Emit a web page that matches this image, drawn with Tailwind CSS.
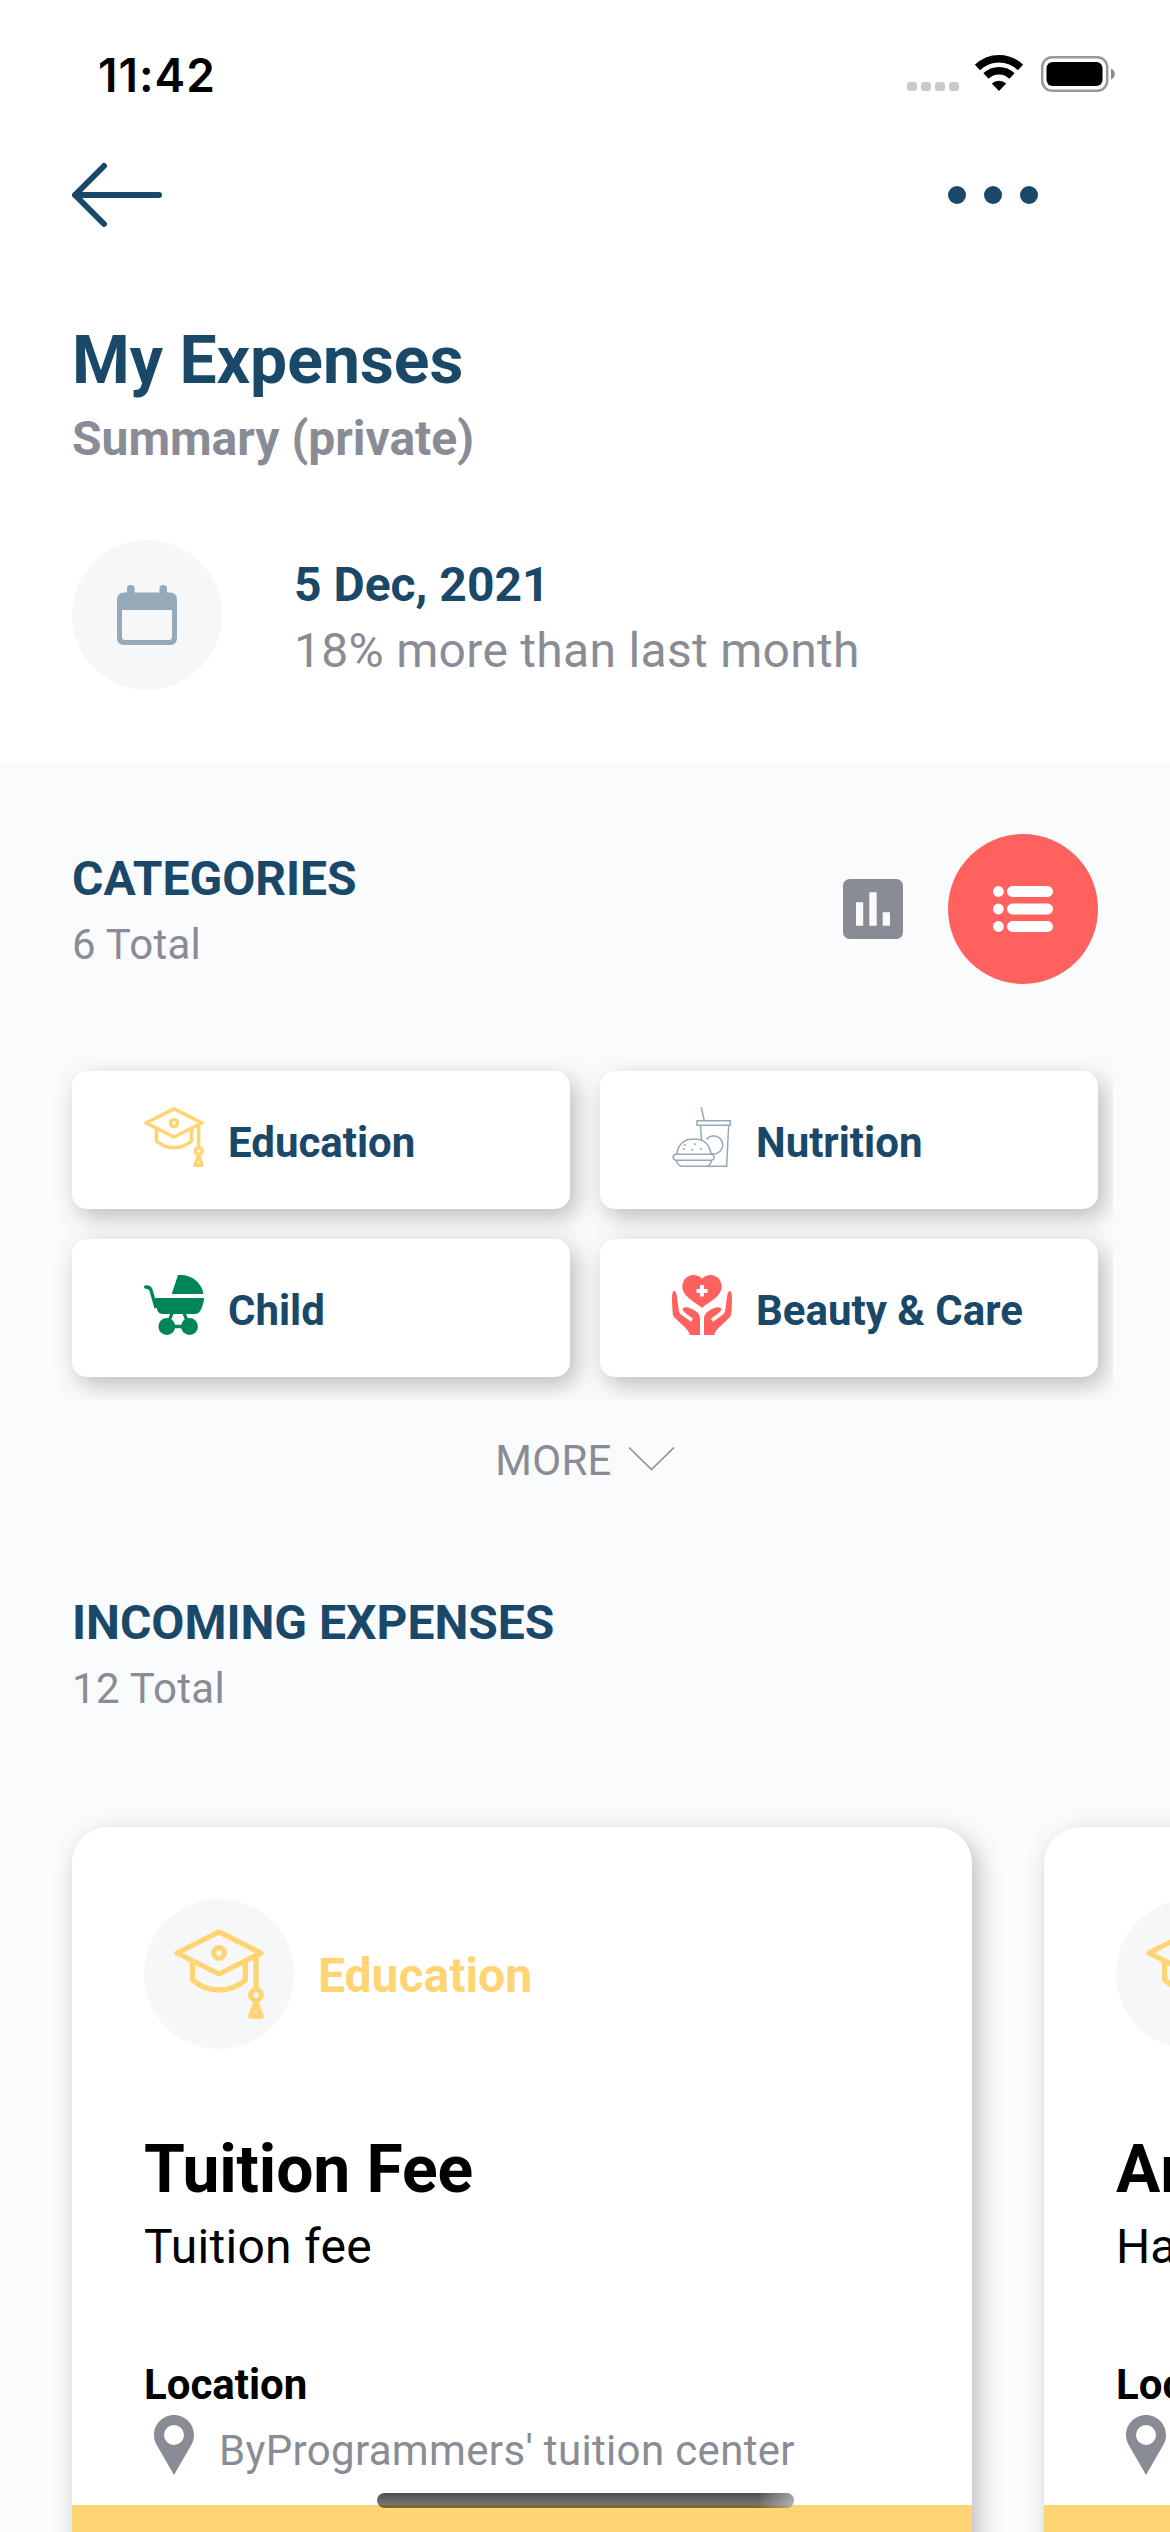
<!DOCTYPE html>
<html lang="en">
<head>
<meta charset="utf-8">
<title>My Expenses</title>
<script src="https://cdn.jsdelivr.net/npm/@tailwindcss/browser@4"></script>
</head>
<body class="bg-[#fafbfd]">
<svg class="hidden">
  <symbol id="cap" viewBox="0 0 90 90">
    <g fill="none" stroke="#ffd573" stroke-width="5.3" stroke-linejoin="round" stroke-linecap="round">
      <path d="M45 2.8 87 24 45 45 3 24Z"/>
      <circle cx="45" cy="24" r="5.3"/>
      <path d="M18.6 33V51Q30 61 45 61Q60 61 71.3 51V33M82 27V60"/>
      <circle cx="82" cy="66" r="5.3"/>
      <path d="M82 73.5 87.2 87.2H76.6Z"/>
    </g>
  </symbol>
  <symbol id="pin" viewBox="0 0 60 60">
    <path fill="#898c95" fill-rule="evenodd" d="M30 0C19 0 10 9 10 20C10 24 11 27 13 30.500L30 60 47 30.500C49 27 50 24 50 20C50 9 41 0 30 0ZM30 30A10 10 0 1 1 30 10A10 10 0 0 1 30 30Z"/>
  </symbol>
</svg>
<div class="relative flex h-[2532px] w-[1170px] flex-col overflow-hidden bg-[#fafbfd] font-[Roboto,sans-serif] text-[#194868]">
  <header class="h-[762px] shrink-0 bg-white">
    <div class="flex h-[150px] items-start justify-between pt-[47px] pr-[53px] pl-[98px]">
      <span class="font-[Inter,sans-serif] text-[46px] leading-[56px] font-semibold tracking-[1px] text-black">11:42</span>
      <svg class="mt-[6px] h-[42px] w-[212px]" viewBox="905 53 212 42">
        <g fill="#cbcbcb"><rect x="907" y="82" width="10" height="9" rx="3"/><rect x="921" y="82" width="10" height="9" rx="3"/><rect x="935" y="82" width="10" height="9" rx="3"/><rect x="949" y="82" width="10" height="9" rx="3"/></g>
        <g fill="none" stroke="#000">
          <path stroke-width="7.500" d="M977.500 67.500A30.500 30.500 0 0 1 1020.500 67.500"/>
          <path stroke-width="7.500" d="M986 76A18.500 18.500 0 0 1 1012 76"/>
        </g>
        <path d="M999 91 991.800 83.600A10.300 10.300 0 0 1 1006.200 83.600Z"/>
        <rect x="1042.200" y="57.200" width="65" height="33.600" rx="10" fill="none" stroke="#999" stroke-width="2.500"/>
        <rect x="1046.500" y="62" width="56" height="24" rx="6"/>
        <path fill="#8a8a8a" d="M1111 68.500C1116 70.500 1116 77.500 1111 79.500Z"/>
      </svg>
    </div>
    <div class="flex h-[90px] items-center justify-between pr-[132px] pl-[72px]">
      <svg class="h-[66px] w-[91px]" viewBox="0 0 91 66" fill="none" stroke="#194868" stroke-width="6" stroke-linecap="round" stroke-linejoin="round"><path d="M87 33H3M32 4 3 33 32 62"/></svg>
      <svg class="h-[18px] w-[90px]" viewBox="0 0 90 18" fill="#194868"><circle cx="9" cy="9" r="9"/><circle cx="45" cy="9" r="9"/><circle cx="81" cy="9" r="9"/></svg>
    </div>
    <div class="px-[72px] pt-[76px]">
      <h1 class="text-[66px] leading-[90px] font-bold">My Expenses</h1>
      <p class="text-[48px] leading-[66px] font-bold text-[#898c95]">Summary (private)</p>
      <div class="mt-[68px] flex h-[150px] items-center gap-[72px]">
        <div class="flex size-[150px] items-center justify-center rounded-full bg-[#f5f7f9]">
          <svg class="size-[60px]" viewBox="0 0 60 60" fill="#95a9b8"><path fill-rule="evenodd" d="M7 7.500H10V3Q10 0 13.500 0Q17.500 0 17.500 3V7.500H42.500V3Q42.500 0 46 0Q50 0 50 3V7.500H53Q60 7.500 60 15V53Q60 60 53 60H7Q0 60 0 53V15Q0 7.500 7 7.500ZM5 25V52Q5 55 8 55H52Q55 55 55 52V25Z"/></svg>
        </div>
        <div class="pt-[5px]">
          <p class="text-[48px] leading-[66px] font-bold">5 Dec, 2021</p>
          <p class="text-[48px] leading-[66px] tracking-[0.3px] text-[#898c95]">18% more than last month</p>
        </div>
      </div>
    </div>
  </header>

  <section class="h-[309px] shrink-0 px-[72px] pt-[72px]">
    <div class="flex h-[150px] items-center">
      <div class="grow pt-[5px]">
        <h2 class="text-[48px] leading-[66px] font-bold">CATEGORIES</h2>
        <p class="text-[42px] leading-[66px] tracking-[0.3px] text-[#898c95]">6 Total</p>
      </div>
      <svg class="mr-[45px] size-[60px]" viewBox="0 0 60 60"><rect width="60" height="60" rx="6.500" fill="#898c95"/><path fill="#fafbfd" d="M13 23.300H20.200V46.700H13ZM26.300 13.300H33.700V46.700H26.300ZM39.700 33.300H47V46.700H39.700Z"/></svg>
      <div class="flex size-[150px] items-center justify-center rounded-full bg-[#ff615f]">
        <svg class="size-[60px]" viewBox="0 0 60 60" fill="#fff"><circle cx="5.400" cy="12.500" r="5.400"/><circle cx="5.400" cy="30" r="5.400"/><circle cx="5.400" cy="47.500" r="5.400"/><rect x="14" y="7.100" width="46" height="10.800" rx="5.400"/><rect x="14" y="24.600" width="46" height="10.800" rx="5.400"/><rect x="14" y="42.100" width="46" height="10.800" rx="5.400"/></svg>
      </div>
    </div>
  </section>

  <div class="-mt-[47px] grid h-[377px] w-[1113px] shrink-0 grid-cols-[498px_498px] grid-rows-[138px_138px] gap-[30px] overflow-hidden pt-[47px] pl-[72px] text-[42px] leading-[66px] font-bold">
    <div class="flex items-start rounded-[15px] bg-white pt-[36px] pl-[72px] shadow-[6px_8px_25px_rgba(0,0,0,0.26)]">
      <svg class="mr-[24px] size-[60px]"><use href="#cap"/></svg><span class="pt-[3px]">Education</span>
    </div>
    <div class="flex items-start rounded-[15px] bg-white pt-[36px] pl-[72px] shadow-[6px_8px_25px_rgba(0,0,0,0.26)]">
      <svg class="mr-[24px] size-[60px]" viewBox="0 0 60 60" fill="none" stroke="#95a9b8" stroke-width="1.500">
        <path d="M29.300 0 32.200 13.500M25 13.700H58.200V18.200H25ZM28.500 18.200 29.400 33M56.700 18.200 54.600 59.200H35M34.500 32.500A9 9 0 1 1 39 46.500"/>
        <path d="M4.800 47C6 38 12 32.200 19 32.200H24.500C32 32.200 38 38 39 47M4.500 53.300C5 57 7 59.200 11 59.200H33C37 59.200 39 57 39.500 53.300"/>
        <rect x="1.200" y="47.200" width="40.800" height="6" rx="3"/>
        <path stroke-width="1.800" d="M12.800 37.200v1.800M23 36.200v1.800M11.800 41v1.800M20.300 42v1.800M29 41v1.800"/>
      </svg><span class="pt-[3px]">Nutrition</span>
    </div>
    <div class="flex items-start rounded-[15px] bg-white pt-[36px] pl-[72px] shadow-[6px_8px_25px_rgba(0,0,0,0.26)]">
      <svg class="mr-[24px] size-[60px]" viewBox="0 0 60 60" fill="#00845a">
        <path d="M34 0H37C48 0 58 8 59.500 19H27.700ZM10.500 23H60C60 27 58.500 31.500 56.500 35.500Q54.500 39 50.500 39H19Q14.500 39 13 34.500Z"/>
        <circle cx="22.800" cy="51.500" r="8.400"/><circle cx="45.500" cy="51.500" r="8.400"/>
        <path fill="none" stroke="#00845a" stroke-width="3.300" d="M1.500 12H2.500Q6.300 12 7.300 16L12 33M28.200 38 25 46M40 38 43 46M25 51.500H43"/>
        <circle cx="1.600" cy="12" r="1.600"/>
      </svg><span class="pt-[3px]">Child</span>
    </div>
    <div class="flex items-start rounded-[15px] bg-white pt-[36px] pl-[72px] shadow-[6px_8px_25px_rgba(0,0,0,0.26)]">
      <svg class="mr-[24px] size-[60px]" viewBox="0 0 60 60" fill="#ff615f">
        <path fill-rule="evenodd" d="M30 33C25 28 10.300 22 10.300 11.500C10.300 5 15.500 0 21 0C25 0 28 1.300 30 3.800C32 1.300 35 0 39 0C44.500 0 49.700 5 49.700 11.500C49.700 22 35 28 30 33ZM28 10V14H24.500V18H28V21.500H32V18H35.500V14H32V10Z"/>
        <path id="hand" d="M2 16C.5 16 0 20 0 26L.5 36C.6 39 1.200 41.500 3.500 43.500L12 51.500C15.500 54.500 17 57 17.700 60H28V44C28 39 25 36.500 20 34C16 32 13 31.500 11 33C10 35 12 37 14 38.500L21 43.800 19 46.700 9 39.500C7 38 6.800 36 6.500 33L5 22C4.600 18 3.500 16 2 16Z"/>
        <use href="#hand" transform="matrix(-1 0 0 1 60 0)"/>
      </svg><span class="pt-[3px]">Beauty &amp; Care</span>
    </div>
  </div>

  <div class="flex h-[189px] shrink-0 items-start justify-center pt-[26px] text-[42px] leading-[66px] text-[#898c95]">
    <span class="pt-px tracking-[0.3px]">MORE</span>
    <svg class="mt-[19px] ml-[15px] h-[26px] w-[48px]" viewBox="0 0 48 26" fill="none" stroke="#898c95" stroke-width="1.600"><path d="M2 1.500 24.500 23.500 47 1.500"/></svg>
  </div>

  <section class="h-[237px] shrink-0 px-[72px]">
    <h2 class="text-[48px] leading-[66px] font-bold">INCOMING EXPENSES</h2>
    <p class="text-[42px] leading-[66px] tracking-[0.3px] text-[#898c95]">12 Total</p>
  </section>

  <div class="flex h-[705px] w-[1944px] shrink-0 gap-[72px] pl-[72px] text-black">
    <article class="flex h-[860px] w-[900px] shrink-0 flex-col rounded-[36px] bg-white shadow-[6px_8px_25px_rgba(0,0,0,0.26)]">
      <div class="flex h-[222px] items-end gap-[24px] pl-[72px]">
        <div class="flex size-[150px] items-center justify-center rounded-full bg-[#f5f7f9]"><svg class="size-[90px]"><use href="#cap"/></svg></div>
        <span class="pb-[40px] text-[48px] leading-[66px] font-bold text-[#ffd573]">Education</span>
      </div>
      <div class="h-[456px] pt-[76px] pl-[72px]">
        <h3 class="text-[66px] leading-[90px] font-bold tracking-[-0.1px]">Tuition Fee</h3>
        <p class="-mt-px text-[48px] leading-[66px] tracking-[0.3px]">Tuition fee</p>
        <h4 class="mt-[72px] text-[42px] leading-[66px] font-bold">Location</h4>
        <div class="flex items-start"><svg class="mt-[-3px] mr-[15px] size-[60px]"><use href="#pin"/></svg><span class="text-[42px] leading-[66px] tracking-[0.34px] text-[#898c95]">ByProgrammers' tuition center</span></div>
      </div>
      <div class="grow rounded-b-[36px] bg-[#ffd573]"></div>
    </article>
    <article class="flex h-[860px] w-[900px] shrink-0 flex-col rounded-[36px] bg-white shadow-[6px_8px_25px_rgba(0,0,0,0.26)]">
      <div class="flex h-[222px] items-end gap-[24px] pl-[72px]">
        <div class="flex size-[150px] items-center justify-center rounded-full bg-[#f5f7f9]"><svg class="size-[90px]"><use href="#cap"/></svg></div>
      </div>
      <div class="h-[456px] pt-[76px] pl-[72px]">
        <h3 class="text-[66px] leading-[90px] font-bold">Arduino</h3>
        <p class="-mt-px text-[48px] leading-[66px]">Hardware</p>
        <h4 class="mt-[72px] text-[42px] leading-[66px] font-bold">Location</h4>
        <div class="flex items-start"><svg class="mt-[-3px] mr-[15px] size-[60px]"><use href="#pin"/></svg></div>
      </div>
      <div class="grow rounded-b-[36px] bg-[#ffd573]"></div>
    </article>
  </div>
  <div class="absolute top-[2493px] left-[377px] h-[15px] w-[417px] overflow-hidden rounded-full">
    <div class="h-[12px] bg-linear-to-b from-[#505050] to-[#757575]"></div>
    <div class="h-[3px] bg-[#7b6535]"></div>
    <div class="absolute inset-y-0 right-0 w-[36px] bg-linear-to-r from-white/0 to-white/45"></div>
  </div>
</div>
</body>
</html>
